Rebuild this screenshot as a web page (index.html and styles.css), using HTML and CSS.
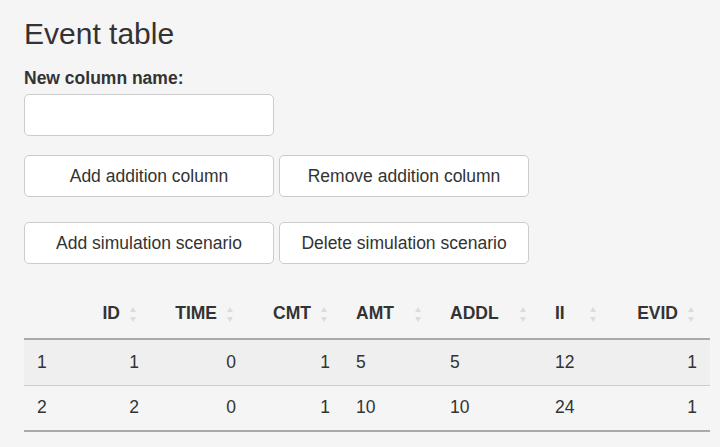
FILE: index.html
```html
<!DOCTYPE html>
<html>
<head>
<meta charset="utf-8">
<link rel="stylesheet" href="styles.css">
</head>
<body>
<div class="page">
  <h3 class="title">Event table</h3>
  <div class="field">
    <label class="label" for="colname">New column name:</label>
    <input class="input" id="colname" type="text">
  </div>
  <div class="btn-row">
    <button class="btn">Add addition column</button>
    <button class="btn">Remove addition column</button>
  </div>
  <div class="btn-row">
    <button class="btn">Add simulation scenario</button>
    <button class="btn">Delete simulation scenario</button>
  </div>
  <table class="dt">
    <colgroup>
      <col class="w0"><col class="w1"><col class="w2"><col class="w3"><col class="w4"><col class="w5"><col class="w6"><col class="w7">
    </colgroup>
    <thead>
      <tr>
        <th class="plain"></th>
        <th class="r">ID<span class="sort"></span></th>
        <th class="r">TIME<span class="sort"></span></th>
        <th class="r">CMT<span class="sort"></span></th>
        <th>AMT<span class="sort"></span></th>
        <th>ADDL<span class="sort"></span></th>
        <th>II<span class="sort"></span></th>
        <th class="r">EVID<span class="sort"></span></th>
      </tr>
    </thead>
    <tbody>
      <tr class="odd">
        <td>1</td><td class="r">1</td><td class="r">0</td><td class="r">1</td><td>5</td><td>5</td><td>12</td><td class="r">1</td>
      </tr>
      <tr>
        <td>2</td><td class="r">2</td><td class="r">0</td><td class="r">1</td><td>10</td><td>10</td><td>24</td><td class="r">1</td>
      </tr>
    </tbody>
  </table>
</div>
</body>
</html>
```

FILE: styles.css
```css
html, body {
  margin: 0;
  padding: 0;
  background: #f5f5f5;
}
body {
  font-family: "Liberation Sans", Arial, sans-serif;
  color: #333;
  font-size: 17.5px;
  line-height: 1.42857;
}
.page {
  padding: 14px 10px 0 24px;
}
.title {
  margin: 0 0 12px 0;
  font-size: 30px;
  font-weight: normal;
  line-height: 40px;
}
.field {
  display: flex;
  flex-direction: column;
  align-items: flex-start;
}
.label {
  font-weight: bold;
  font-size: 17.5px;
  line-height: 25px;
  margin-bottom: 3px;
}
.input {
  box-sizing: border-box;
  width: 250px;
  height: 42px;
  border: 1px solid #ccc;
  border-radius: 5px;
  background: #fff;
  margin: 0;
  padding: 0 15px;
  font-family: inherit;
  font-size: 17.5px;
}
.btn-row {
  display: flex;
  gap: 5px;
  margin-top: 19px;
}
.btn-row + .btn-row {
  margin-top: 25px;
}
.btn {
  box-sizing: border-box;
  width: 250px;
  height: 42px;
  border: 1px solid #ccc;
  border-radius: 5px;
  background: #fff;
  color: #333;
  font-family: inherit;
  font-size: 17.5px;
  padding: 0;
  margin: 0;
}
.dt {
  margin-top: 25px;
  width: 686px;
  table-layout: fixed;
  border-collapse: collapse;
}
.w0 { width: 61px; }
.w1 { width: 67px; }
.w2 { width: 97px; }
.w3 { width: 94px; }
.w4 { width: 94px; }
.w5 { width: 105px; }
.w6 { width: 70px; }
.w7 { width: 98px; }
.dt th {
  position: relative;
  text-align: left;
  font-weight: bold;
  height: 50px;
  padding: 0 32px 0 13px;
  border-bottom: 2px solid #aaa;
  box-sizing: border-box;
  white-space: nowrap;
}
.dt th.r, .dt td.r {
  text-align: right;
}
.dt td {
  height: 46px;
  padding: 0 13px;
  border-bottom: 1px solid #ccc;
  box-sizing: border-box;
}
.dt tbody tr:last-child td {
  border-bottom: 2px solid #aaa;
  height: 46px;
}
.dt tr.odd td {
  background: #efefef;
}
.sort {
  position: absolute;
  right: 15px;
  top: 18px;
  width: 7px;
  height: 15px;
}
.sort::before, .sort::after {
  content: "";
  position: absolute;
  left: 0;
  width: 0;
  height: 0;
  border-left: 3.5px solid transparent;
  border-right: 3.5px solid transparent;
}
.sort::before {
  top: 0;
  border-bottom: 5px solid #dcdcdc;
}
.sort::after {
  top: 10px;
  border-top: 5px solid #dcdcdc;
}
```
